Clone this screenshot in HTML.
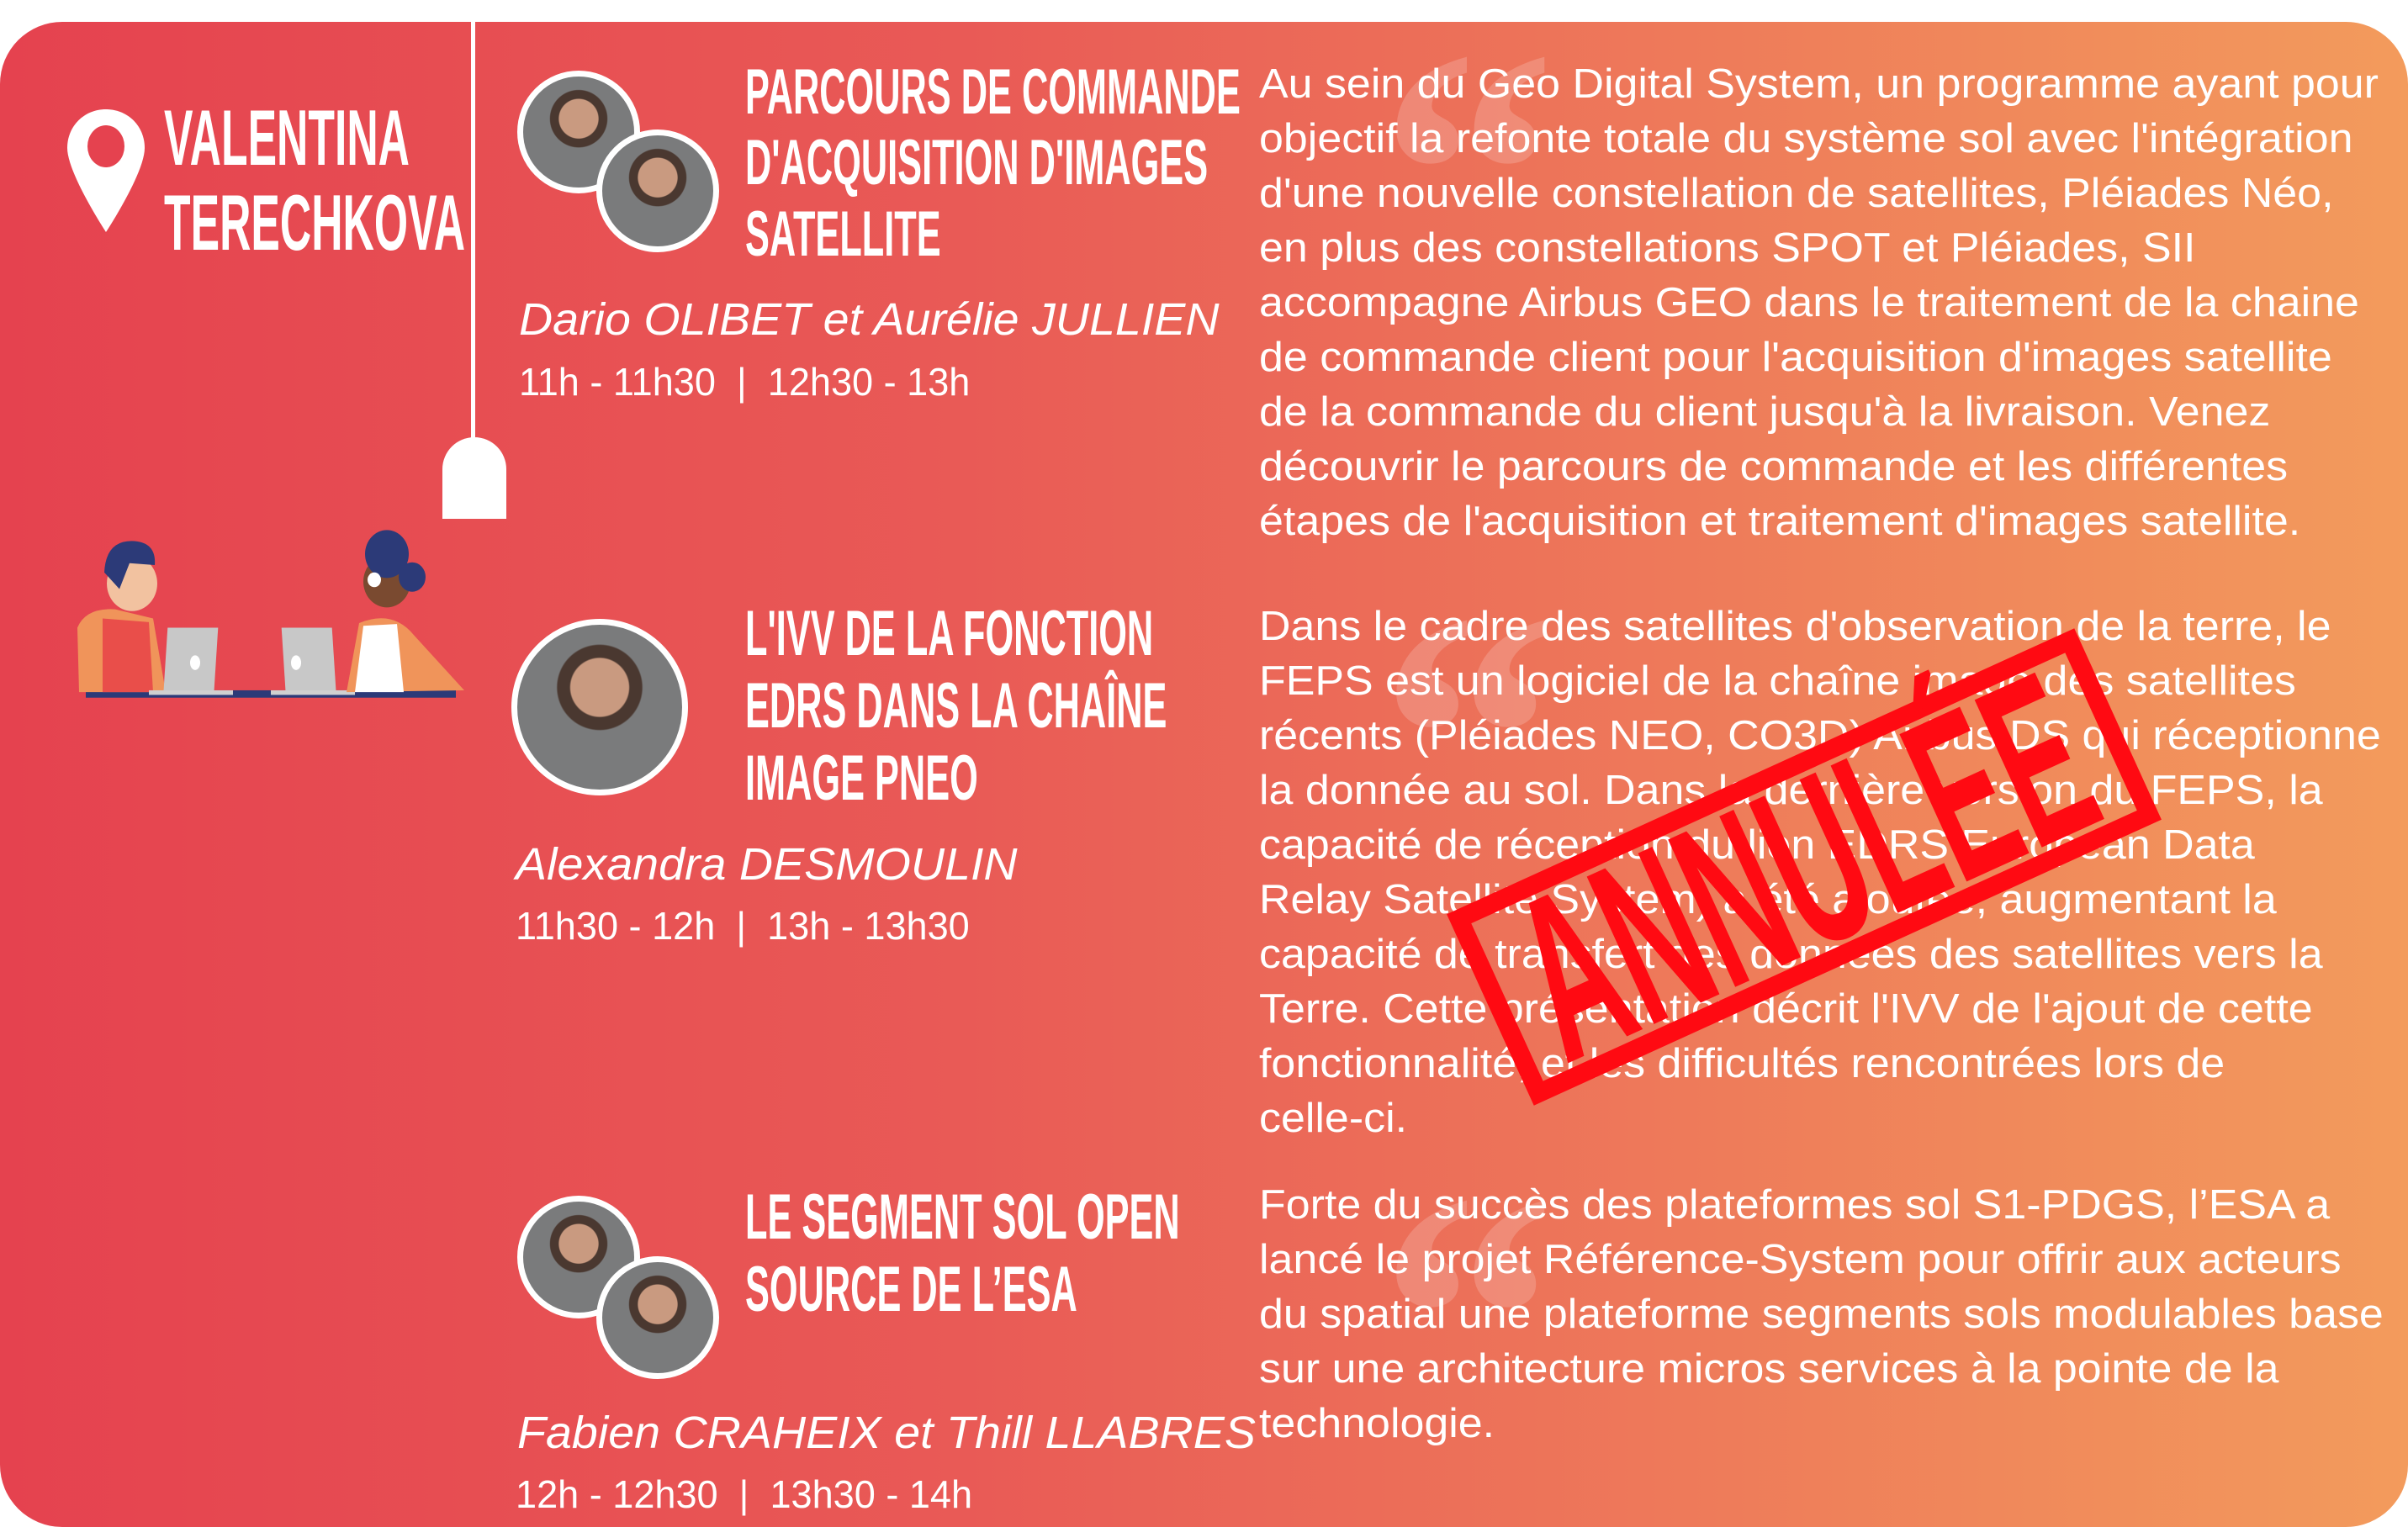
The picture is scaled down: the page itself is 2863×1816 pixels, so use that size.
<!DOCTYPE html>
<html><head><meta charset="utf-8"><style>
*{margin:0;padding:0;box-sizing:border-box}
html,body{width:2863px;height:1816px;background:#fff;overflow:hidden;font-family:"Liberation Sans",sans-serif;color:#fff}
.card{position:absolute;left:0;top:26px;width:2863px;height:1790px;border-radius:74px;background:linear-gradient(90deg,#e5424f 0%,#e95a56 40%,#ee7a5a 70%,#f39b5c 100%);overflow:hidden}
.a{position:absolute;white-space:nowrap;transform-origin:0 50%}
.t{font-weight:bold;font-size:76px;line-height:86px;height:86px;transform:scaleX(0.57)}
.n{font-weight:bold;font-size:94px;line-height:100px;transform:scaleX(0.55)}
.sp{font-style:italic;font-size:54px;line-height:64px;transform:scaleX(1.03)}
.tm{font-size:46px;line-height:56px;transform:scaleX(0.98)}
.d{font-size:49px;line-height:65px;left:1497px;transform:scaleX(1.06)}
.q{position:absolute;font-family:"Liberation Serif",serif;font-size:420px;line-height:420px;color:rgba(255,255,255,0.18);font-weight:bold}
.av{position:absolute;border-radius:50%;border:7px solid #fff;background:radial-gradient(circle at 50% 38%,#c99a80 0 22%,#4a3830 23% 32%,#7a7b7c 33%)}
</style></head><body>
<div class="card">
<div style="position:absolute;left:560px;top:-30px;width:5px;height:525px;background:#fff"></div>
<div style="position:absolute;left:526px;top:494px;width:76px;height:97px;background:#fff;border-radius:38px 38px 0 0"></div>

<svg style="position:absolute;left:80px;top:104px" width="92" height="146" viewBox="0 0 92 146"><path d="M46 0C20 0 0 20 0 46c0 30 46 100 46 100s46-70 46-100C92 20 72 0 46 0z" fill="#fff"/><ellipse cx="46" cy="44" rx="22" ry="25" fill="#e5424f"/></svg>
<div class="a n" style="left:195px;top:88px">VALENTINA</div>
<div class="a n" style="left:195px;top:189px">TERECHKOVA</div>

<svg style="position:absolute;left:82px;top:600px" width="480" height="230" viewBox="0 0 480 210" preserveAspectRatio="none">
<rect x="20" y="178" width="440" height="8" fill="#2c3a78"/>
<path d="M10 110 Q20 88 55 90 L100 100 L115 180 L12 180Z" fill="#f0945a"/>
<path d="M40 100 L95 104 L100 180 L40 180Z" fill="#e94e4a"/>
<circle cx="75" cy="62" r="30" fill="#f2c2a0"/>
<path d="M42 50 Q44 14 78 16 Q104 18 102 42 L72 40 L60 68Z" fill="#2c3a78"/>
<rect x="125" y="110" width="60" height="70" fill="#c8c8c8" transform="skewX(-4)"/>
<rect x="95" y="178" width="100" height="5" fill="#d0d0d0"/>
<ellipse cx="150" cy="148" rx="6" ry="8" fill="#fff"/>
<rect x="245" y="110" width="60" height="70" fill="#c8c8c8" transform="skewX(4)"/>
<rect x="240" y="178" width="100" height="5" fill="#d0d0d0"/>
<ellipse cx="270" cy="148" rx="6" ry="8" fill="#fff"/>
<path d="M345 105 Q385 90 410 118 L470 178 L330 180Z" fill="#f0945a"/>
<path d="M350 108 L390 106 L398 180 L340 180Z" fill="#fff"/>
<circle cx="378" cy="60" r="28" fill="#7a4a30"/>
<circle cx="378" cy="30" r="26" fill="#2c3a78"/><circle cx="408" cy="55" r="16" fill="#2c3a78"/>
<circle cx="363" cy="58" r="8" fill="#fff"/>
</svg>

<!-- section 1 -->
<div class="av" style="left:615px;top:58px;width:146px;height:146px"></div>
<div class="av" style="left:709px;top:128px;width:146px;height:146px"></div>
<div class="a t" style="left:886px;top:41px">PARCOURS DE COMMANDE</div>
<div class="a t" style="left:886px;top:125px">D'ACQUISITION D'IMAGES</div>
<div class="a t" style="left:886px;top:210px">SATELLITE</div>
<div class="a sp" style="left:617px;top:322px">Dario OLIBET et Aurélie JULLIEN</div>
<div class="a tm" style="left:617px;top:400px">11h - 11h30&nbsp; |&nbsp; 12h30 - 13h</div>

<div class="q" style="left:1640px;top:-30px">“</div>
<div class="a d" style="top:42px">Au sein du Geo Digital System, un programme ayant pour</div>
<div class="a d" style="top:107px">objectif la refonte totale du système sol avec l'intégration</div>
<div class="a d" style="top:172px">d'une nouvelle constellation de satellites, Pléiades Néo,</div>
<div class="a d" style="top:237px">en plus des constellations SPOT et Pléiades, SII</div>
<div class="a d" style="top:302px">accompagne Airbus GEO dans le traitement de la chaine</div>
<div class="a d" style="top:367px">de commande client pour l'acquisition d'images satellite</div>
<div class="a d" style="top:432px">de la commande du client jusqu'à la livraison. Venez</div>
<div class="a d" style="top:497px">découvrir le parcours de commande et les différentes</div>
<div class="a d" style="top:562px">étapes de l'acquisition et traitement d'images satellite.</div>

<!-- section 2 -->
<div class="av" style="left:608px;top:710px;width:210px;height:210px"></div>
<div class="a t" style="left:886px;top:685px">L'IVV DE LA FONCTION</div>
<div class="a t" style="left:886px;top:771px">EDRS DANS LA CHAÎNE</div>
<div class="a t" style="left:886px;top:857px">IMAGE PNEO</div>
<div class="a sp" style="left:613px;top:970px">Alexandra DESMOULIN</div>
<div class="a tm" style="left:613px;top:1047px">11h30 - 12h&nbsp; |&nbsp; 13h - 13h30</div>

<div class="q" style="left:1640px;top:640px">“</div>
<div class="a d" style="top:687px">Dans le cadre des satellites d'observation de la terre, le</div>
<div class="a d" style="top:752px">FEPS est un logiciel de la chaîne image des satellites</div>
<div class="a d" style="top:817px">récents (Pléiades NEO, CO3D) Airbus DS qui réceptionne</div>
<div class="a d" style="top:882px">la donnée au sol. Dans la dernière version du FEPS, la</div>
<div class="a d" style="top:947px">capacité de réception du lien EDRS European Data</div>
<div class="a d" style="top:1012px">Relay Satellite System) a été ajoutée, augmentant la</div>
<div class="a d" style="top:1077px">capacité de transfert des données des satellites vers la</div>
<div class="a d" style="top:1142px">Terre. Cette présentation décrit l'IVV de l'ajout de cette</div>
<div class="a d" style="top:1207px">fonctionnalité, et les difficultés rencontrées lors de</div>
<div class="a d" style="top:1272px">celle-ci.</div>

<div style="position:absolute;left:1735px;top:880px;width:820px;height:250px;border:22px solid #ff0a12;transform:rotate(-24.5deg);display:flex;align-items:center;justify-content:center">
<span style="color:#ff0a12;font-weight:bold;font-size:280px;line-height:220px;display:inline-block;transform:scaleX(0.52);letter-spacing:2px">ANNULÉE</span></div>

<!-- section 3 -->
<div class="av" style="left:615px;top:1396px;width:146px;height:146px"></div>
<div class="av" style="left:709px;top:1468px;width:146px;height:146px"></div>
<div class="a t" style="left:886px;top:1379px">LE SEGMENT SOL OPEN</div>
<div class="a t" style="left:886px;top:1465px">SOURCE DE L’ESA</div>
<div class="a sp" style="left:615px;top:1646px">Fabien CRAHEIX et Thill LLABRES</div>
<div class="a tm" style="left:613px;top:1723px">12h - 12h30&nbsp; |&nbsp; 13h30 - 14h</div>

<div class="q" style="left:1640px;top:1330px">“</div>
<div class="a d" style="top:1375px">Forte du succès des plateformes sol S1-PDGS, l’ESA a</div>
<div class="a d" style="top:1440px">lancé le projet Référence-System pour offrir aux acteurs</div>
<div class="a d" style="top:1505px">du spatial une plateforme segments sols modulables base</div>
<div class="a d" style="top:1570px">sur une architecture micros services à la pointe de la</div>
<div class="a d" style="top:1635px">technologie.</div>
</div>
</body></html>
